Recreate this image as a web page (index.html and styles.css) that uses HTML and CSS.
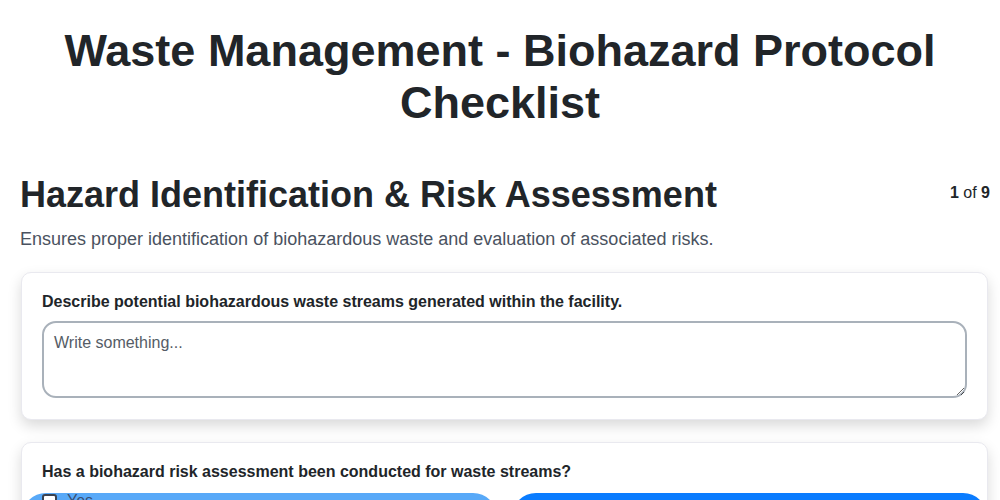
FILE: index.html
```html
<!DOCTYPE html>
<html lang="en">
<head>
<meta charset="utf-8">
<title>Waste Management - Biohazard Protocol Checklist</title>
<link rel="stylesheet" href="styles.css">
</head>
<body>
<header class="page-header">
  <h1 class="page-title">Waste Management - Biohazard Protocol Checklist</h1>
</header>
<main class="section">
  <div class="section-head">
    <h2 class="section-title">Hazard Identification &amp; Risk Assessment</h2>
    <div class="pager"><b>1</b> of <b>9</b></div>
  </div>
  <p class="section-desc">Ensures proper identification of biohazardous waste and evaluation of associated risks.</p>

  <div class="card">
    <label class="q-label" for="q1">Describe potential biohazardous waste streams generated within the facility.</label>
    <textarea id="q1" class="q-text" placeholder="Write something..."></textarea>
  </div>

  <div class="card">
    <div class="q-label">Has a biohazard risk assessment been conducted for waste streams?</div>
    <div class="options">
      <label class="option option-light"><span class="option-inner option-inner-top"><span class="box"></span><span class="option-text">Yes</span></span></label>
      <label class="option option-dark"><span class="option-inner"><span class="box"></span><span class="option-text">No</span></span></label>
    </div>
  </div>
</main>
</body>
</html>
```

FILE: styles.css
```css
* { box-sizing: border-box; }
html, body { margin: 0; padding: 0; background: #fff; }
body {
  font-family: "Liberation Sans", Arial, sans-serif;
  color: #212529;
}
.page-header {
  padding: 25px 40px 0;
  text-align: center;
}
.page-title {
  margin: 0;
  font-size: 45px;
  line-height: 52px;
  font-weight: 700;
  color: #212529;
}
.section {
  padding: 44px 10px 0 20px;
}
.section-head {
  display: flex;
  justify-content: space-between;
  align-items: flex-start;
}
.section-title {
  margin: 0;
  font-size: 36px;
  line-height: 43px;
  font-weight: 700;
  color: #212529;
}
.pager {
  font-size: 16px;
  line-height: 20px;
  padding-top: 10px;
  color: #212529;
}
.section-desc {
  margin: 12px 0 0;
  font-size: 18px;
  line-height: 22px;
  color: #4a5260;
}
.card {
  margin: 22px 2px 0 1px;
  background: #fff;
  border: 1px solid #e9e9ef;
  border-radius: 10px;
  box-shadow: 0 6px 14px rgba(0, 0, 0, 0.15);
  padding: 19px 20px 21px;
}
.card + .card { margin-top: 22px; }
.q-label {
  display: block;
  font-size: 16px;
  line-height: 19px;
  font-weight: 700;
  color: #212529;
  margin-bottom: 10px;
}
.q-text {
  display: block;
  width: 100%;
  height: 77px;
  border: 2px solid #a9b1ba;
  border-radius: 14px;
  padding: 10px 10px 8px;
  font-family: "Liberation Sans", Arial, sans-serif;
  font-size: 16px;
  line-height: 20px;
  color: #212529;
  resize: vertical;
}
.q-text::placeholder { color: #555c66; }
.options {
  display: grid;
  grid-template-columns: 1fr 1fr;
  gap: 15px;
  margin: 12px -20px 0;
}
.option {
  display: block;
  height: 48px;
  border-radius: 24px;
  padding: 14px 20px 0;
}
.option-light { background: #58a9f8; }
.option-dark { background: #0a7cff; }
.option-inner {
  display: flex;
  align-items: center;
  gap: 10px;
}
.option-inner-top { margin-top: -16px; }
.box {
  width: 15px;
  height: 15px;
  border: 2px solid #3b4250;
  border-radius: 3px;
  background: #fff;
}
.option-text {
  font-size: 16px;
  line-height: 20px;
  color: #3a4f73;
}
.option-dark .option-text { color: #fff; }
```
